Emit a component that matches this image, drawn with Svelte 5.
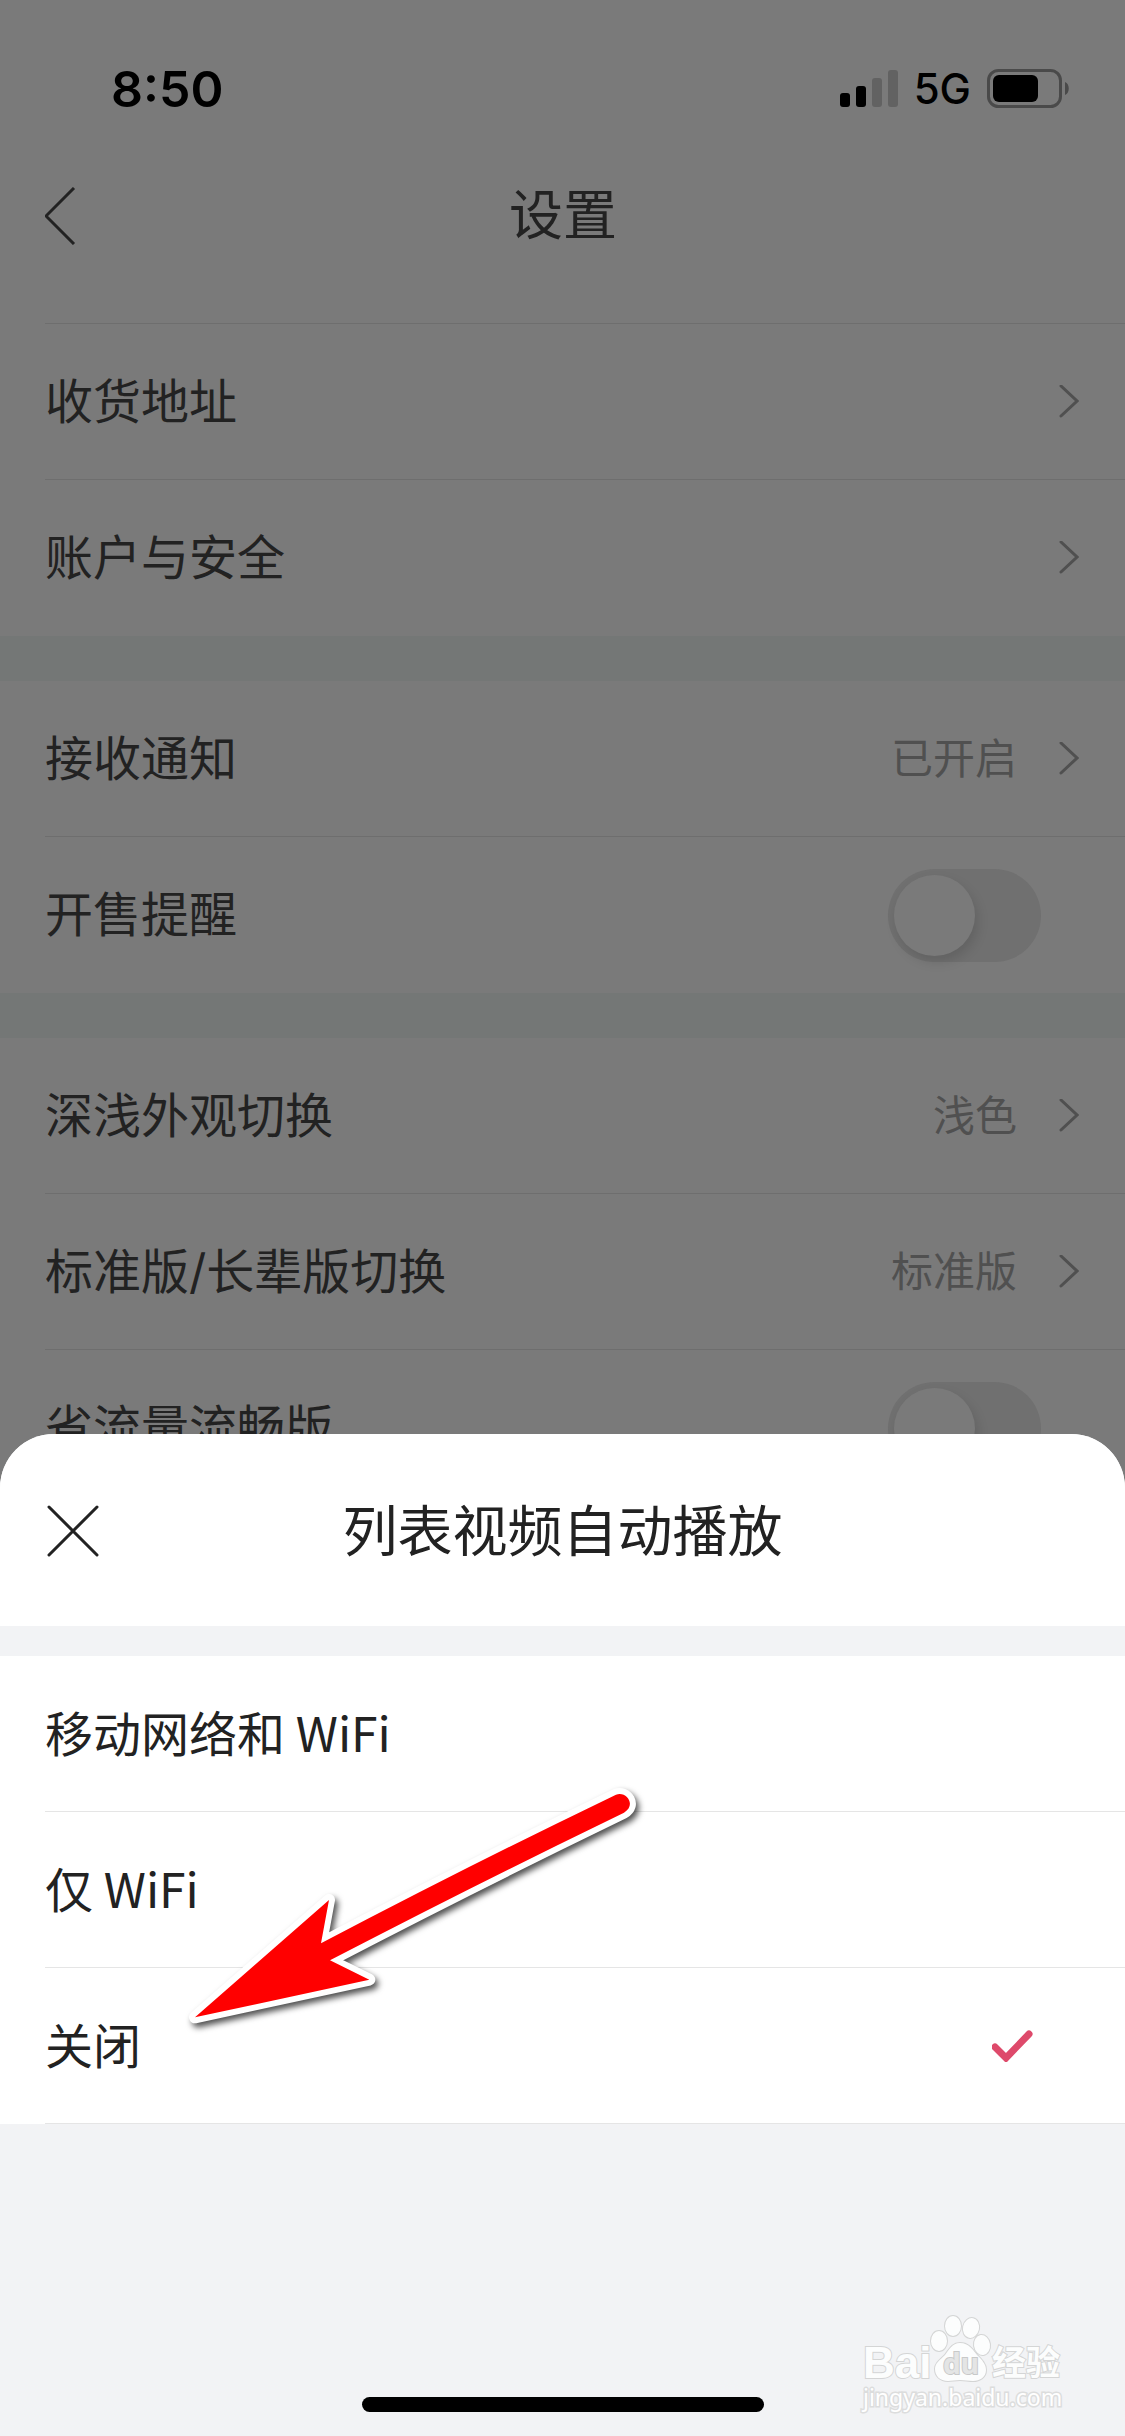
<script lang="ts">
  type Row = { label: string; value?: string; toggle?: boolean }

  const groups: Row[][] = [
    [{ label: "收货地址" }, { label: "账户与安全" }],
    [{ label: "接收通知", value: "已开启" }, { label: "开售提醒", toggle: true }],
    [
      { label: "深浅外观切换", value: "浅色" },
      { label: "标准版/长辈版切换", value: "标准版" },
      { label: "省流量流畅版", toggle: true },
    ],
  ]
  const options = ["移动网络和 WiFi", "仅 WiFi", "关闭"]

  let autoplay = $state("关闭")
</script>

<svelte:head>
  <title>设置</title>
</svelte:head>

<div class="screen">
  <div class="status">
    <time>8:50</time>
    <div class="indicators">
      <svg width="58" height="38" viewBox="0 0 58 38" aria-hidden="true">
        <rect y="23" width="10" height="14" rx="3" />
        <rect x="16" y="16" width="10" height="21" rx="3" />
        <rect class="off" x="32" y="8" width="10" height="29" rx="3" />
        <rect class="off" x="48" width="10" height="37" rx="3" />
      </svg>
      <span>5G</span>
      <svg width="83" height="40" viewBox="0 0 83 40" aria-hidden="true">
        <rect x="1.5" y="1.5" width="72" height="36" rx="10" fill="none" stroke="#4a4a4a" stroke-width="3" />
        <rect x="6" y="6" width="45" height="27" rx="6" />
        <path d="M78 13c5 2 5 11 0 13z" fill="#4a4a4a" />
      </svg>
    </div>
  </div>

  <header class="nav">
    <button class="icon" aria-label="返回">
      <svg width="32" height="58" viewBox="0 0 32 58">
        <path d="M29 1 1 29l28 28" fill="none" stroke="#222" stroke-width="3" />
      </svg>
    </button>
    <h1>设置</h1>
  </header>

  <main>
    {#each groups as rows}
      <ul>
        {#each rows as row}
          <li>
            {#if row.toggle}
              <label class="row">
                <span>{row.label}</span>
                <input type="checkbox" role="switch" />
              </label>
            {:else}
              <a class="row" href="#{row.label}">
                <span>{row.label}</span>
                {#if row.value}<span class="value">{row.value}</span>{/if}
                <svg width="20" height="34" viewBox="0 0 20 34" aria-hidden="true">
                  <path d="m2 1 16 15L2 31" fill="none" stroke="#505050" stroke-width="3" stroke-linecap="round" />
                </svg>
              </a>
            {/if}
          </li>
        {/each}
      </ul>
    {/each}
  </main>

  <section class="sheet" role="dialog" aria-labelledby="sheet-title">
    <header>
      <button class="icon" aria-label="关闭弹窗">
        <svg width="56" height="54" viewBox="0 0 56 54">
          <path d="m4 3 48 48M52 3 4 51" fill="none" stroke="#222" stroke-width="3" stroke-linecap="round" />
        </svg>
      </button>
      <h2 id="sheet-title">列表视频自动播放</h2>
    </header>

    <div class="options">
      {#each options as option}
        <label class="option">
          <input type="radio" name="autoplay" value={option} bind:group={autoplay} />
          <span>{option}</span>
          {#if autoplay === option}
            <svg width="42" height="32" viewBox="0 0 42 32" aria-hidden="true">
              <path d="m3 17 11 11L37 4" fill="none" stroke="#de4a6b" stroke-width="7" stroke-linecap="round" />
            </svg>
          {/if}
        </label>
      {/each}
    </div>

    <footer><div class="home"></div></footer>

    <svg class="arrow" width="480" height="270" viewBox="0 0 1440 810" aria-hidden="true">
      <path
        d="M75 742 477 390 453 520Q900 285 1338 74C1370 62 1400 106 1362 128Q900 352 480 571L598 629Z"
        fill="#fff"
        stroke="#fff"
        stroke-width="36"
        stroke-linejoin="round"
      />
      <path
        d="M75 742 477 390 453 520Q900 285 1338 74C1370 62 1400 106 1362 128Q900 352 480 571L598 629Z"
        fill="#f00"
      />
    </svg>

    <div class="watermark">
      <svg width="202" height="68" viewBox="0 0 202 68">
        <g class="mark">
          <text class="bai" x="0" y="64">Bai</text>
          <ellipse cx="76" cy="27" rx="8" ry="10" />
          <ellipse cx="90" cy="12" rx="8" ry="10" />
          <ellipse cx="108" cy="14" rx="8" ry="10" transform="rotate(12 108 14)" />
          <ellipse cx="119" cy="31" rx="8" ry="10" transform="rotate(-8 119 31)" />
          <path d="M97 29c9 0 13 7 17 12 5 5 9 9 9 15 0 7-6 11-13 11-5 0-8-1-13-1s-8 1-12 1c-8 0-13-5-13-12 0-6 5-9 10-14 4-5 7-12 15-12z" />
          <text class="jy" x="129" y="61">经验</text>
          <text class="du" x="80" y="60">du</text>
        </g>
      </svg>
      <span>jingyan.baidu.com</span>
    </div>
  </section>
</div>

<style>
  :global(body) {
    margin: 0;
  }
  .screen {
    position: relative;
    min-height: 100vh;
    overflow: hidden;
    background: #7a7a7a;
    color: #222;
    font-family: Inter, "Noto Sans CJK SC", sans-serif;
    font-size: 48px;
    line-height: 72px;
  }
  h1,
  h2 {
    flex: 1;
    margin: 0;
    font-size: 54px;
    font-weight: 400;
    text-align: center;
  }
  svg {
    display: block;
    flex: none;
  }
  .icon {
    width: 60px;
    padding: 0;
    border: 0;
    background: none;
  }

  .status {
    display: flex;
    align-items: center;
    justify-content: space-between;
    height: 86px;
    padding: 46px 55px 0 111px;
    color: #000;

    time {
      font-size: 50px;
      font-weight: 600;
    }
    .off {
      fill: #626262;
    }
  }
  .indicators {
    display: flex;
    align-items: center;
    gap: 16px;
    font-size: 42px;
    font-weight: 500;
  }

  .nav {
    display: flex;
    align-items: center;
    height: 168px;
    padding: 0 104px 0 45px;
  }

  main {
    display: flex;
    flex-direction: column;
    gap: 45px;
    margin-top: 23px;
    background: #747776;
  }
  ul {
    margin: 0;
    padding: 0 0 0 45px;
    list-style: none;
    background: #7a7a7a;
  }
  ul:first-child li:first-child {
    border-top: 1px solid #6e6e6e;
  }
  .row {
    display: flex;
    align-items: center;
    box-sizing: border-box;
    height: 156px;
    padding-right: 46px;
    color: inherit;
    text-decoration: none;

    > span:first-child {
      flex: 1;
    }
    svg {
      margin-left: 42px;
    }
  }
  li:not(:last-child) .row {
    border-bottom: 1px solid #6e6e6e;
  }
  .value {
    color: #505050;
    font-size: 42px;
  }
  .row input {
    appearance: none;
    width: 153px;
    height: 93px;
    margin: 0 38px 0 0;
    padding: 6px;
    border-radius: 47px;
    background: #707070;

    &::before {
      content: "";
      display: block;
      width: 81px;
      height: 81px;
      border-radius: 50%;
      background: #7a7a7a;
      box-shadow: 3px 6px 12px #00000020;
    }
    &:checked::before {
      margin-left: auto;
    }
  }

  .sheet {
    position: absolute;
    inset: auto 0 0;
    border-radius: 54px 54px 0 0;
    background: #f2f3f5;

    header {
      display: flex;
      align-items: center;
      box-sizing: border-box;
      height: 192px;
      padding: 2px 105px 0 45px;
      border-radius: 54px 54px 0 0;
      background: #fff;
    }
    h2 {
      font-size: 55px;
    }
  }
  .options {
    margin-top: 30px;
    padding-left: 45px;
    background: #fff;
    font-family: "Noto Sans CJK SC", sans-serif;
  }
  .option {
    display: flex;
    align-items: center;
    justify-content: space-between;
    box-sizing: border-box;
    height: 156px;
    padding-right: 91px;
    border-bottom: 1px solid #e5e5e5;

    input {
      position: absolute;
      opacity: 0;
    }
    span {
      padding-bottom: 6px;
    }
  }
  footer {
    display: flex;
    align-items: flex-end;
    justify-content: center;
    box-sizing: border-box;
    height: 312px;
    padding-bottom: 24px;
  }
  .home {
    width: 402px;
    height: 15px;
    border-radius: 8px;
    background: #000;
  }

  .arrow {
    position: absolute;
    top: 336px;
    left: 170px;
    overflow: visible;
    filter: drop-shadow(3px 4px 3px #000000b0);
  }

  .watermark {
    position: absolute;
    right: 60px;
    bottom: 24px;
    color: #fff;
    font-family: "Noto Sans", sans-serif;
    font-size: 23px;
    line-height: 30px;

    svg {
      overflow: visible;
    }
    span {
      -webkit-text-stroke: 3px #dcdddd;
      paint-order: stroke fill;
    }
    .mark {
      fill: #fcfdfd;
      stroke: #d4d5d5;
      stroke-width: 2;
      paint-order: stroke;
    }
    .bai {
      font: 700 44px "Liberation Sans", sans-serif;
    }
    .jy {
      font: 700 34px "Noto Sans CJK SC", sans-serif;
    }
    .du {
      font: 700 28px "Noto Sans", sans-serif;
      fill: #e4e5e5;
      stroke: #c8c9c9;
    }
  }
</style>
